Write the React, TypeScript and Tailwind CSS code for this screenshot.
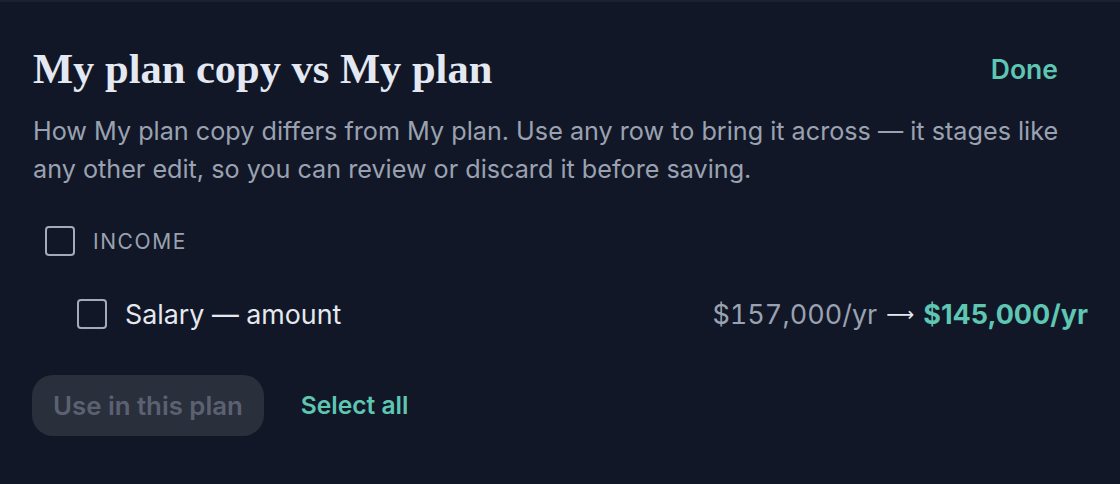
import React from "react";

function Box() {
  return <span className="block w-[30px] h-[30px] rounded-[4px] border-[2.5px] border-[#a3abb9] shrink-0" />;
}

export default function App() {
  return (
    <div
      className="min-h-[484px] bg-[#111726] border-t-2 border-[#1b2131] px-[32px] text-[#9ca3af]"
      style={{ fontFamily: "Inter, 'Noto Sans', sans-serif" }}
    >
      <div className="flex h-[50px] items-center justify-between mt-[42px]">
        <h1
          className="text-[42.5px] leading-[50px] font-bold text-[#e3e8f2] pl-px"
          style={{ fontFamily: "'Liberation Serif', 'DejaVu Serif', serif" }}
        >
          My plan copy vs My plan
        </h1>
        <button className="px-[30px] leading-[50px] text-[26.5px] font-semibold text-[#5ec6b2]">Done</button>
      </div>
      <p className="mt-[18px] text-[25.2px] leading-[38px] text-[#9aa2b1] pl-px">
        How My plan copy differs from My plan. Use any row to bring it across — it stages like any other edit, so you
        can review or discard it before saving.
      </p>
      <div className="mt-[38px] flex h-[30px] items-center gap-[18px] pl-[13px]">
        <Box />
        <span className="text-[21px] leading-none tracking-[0.075em] text-[#9aa2b1]">INCOME</span>
      </div>
      <div className="mt-[43px] flex h-[30px] items-center pl-[45px]">
        <Box />
        <span className="ml-[18px] text-[26.8px] leading-none text-[#e5e8ef]">Salary — amount</span>
        <span className="ml-auto flex items-center leading-none">
          <span className="text-[27px] text-[#9aa2b1] tabular-nums">$157,000/yr</span>
          <span
            className="mx-[9px] text-[19.5px] text-[#e5e8ef] pt-[2px]"
            style={{ fontFamily: "'DejaVu Sans', sans-serif" }}
          >
            ⟶
          </span>
          <span className="font-bold text-[27px] text-[#5ec6b2]">$145,000/yr</span>
        </span>
      </div>
      <div className="mt-[46px] flex items-center">
        <button className="h-[61px] px-[21px] rounded-[21px] bg-[#2a2f3c] text-[25.8px] leading-none font-semibold text-[#5c6172]">
          Use in this plan
        </button>
        <button className="ml-[37px] text-[24.6px] leading-none font-semibold text-[#5ec6b2]">Select all</button>
      </div>
    </div>
  );
}
